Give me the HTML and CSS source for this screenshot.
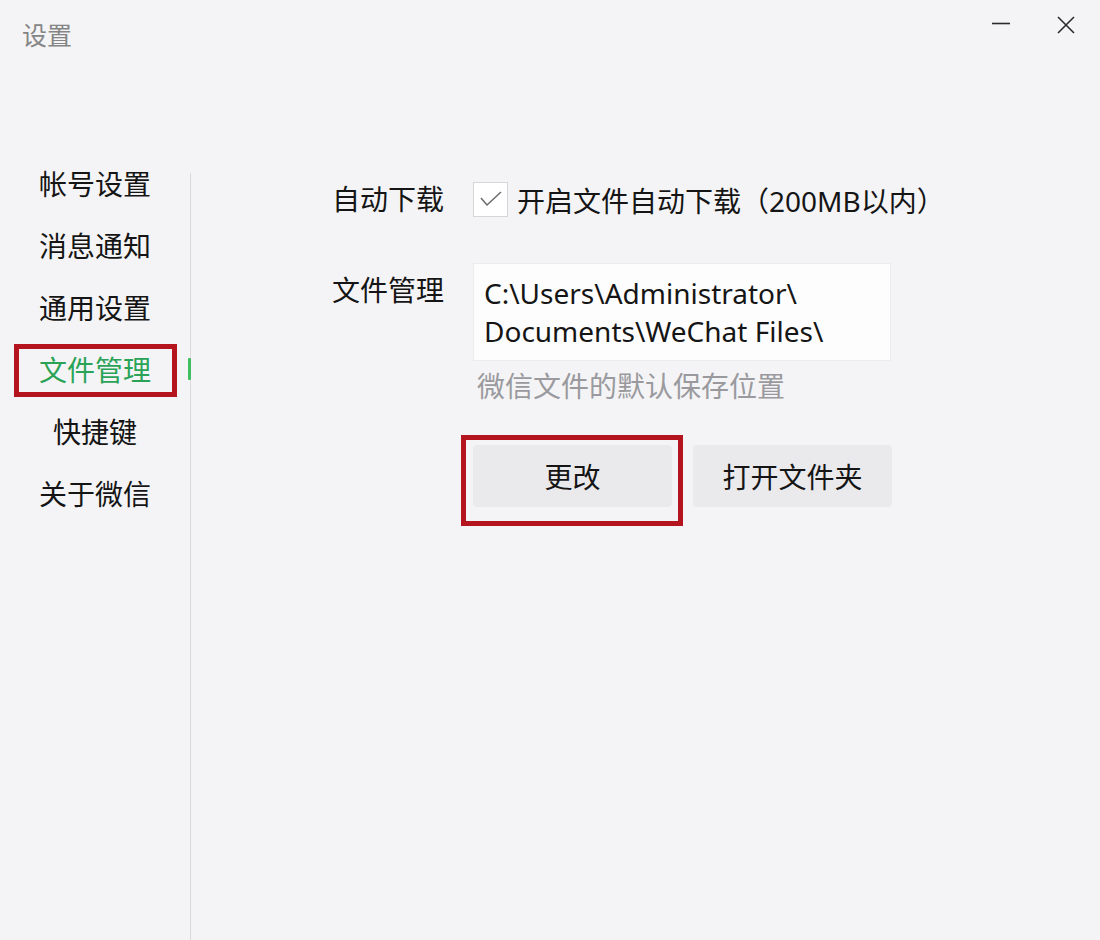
FILE: index.html
```html
<!DOCTYPE html>
<html lang="zh-CN">
<head>
  <meta charset="UTF-8" />
  <title>设置</title>
  <link rel="stylesheet" href="styles.css">
</head>
<body>
  <div class="window">
    <header class="titlebar">
      <span class="title">设置</span>
      <div class="controls">
        <svg class="ctl-min" width="20" height="20" viewBox="0 0 20 20"><path d="M1 9.5h18" stroke="#2b2b2b" stroke-width="1.6"/></svg>
        <svg class="ctl-close" width="20" height="20" viewBox="0 0 20 20"><path d="M2 2l16 16M18 2L2 18" stroke="#2b2b2b" stroke-width="1.6"/></svg>
      </div>
    </header>

    <div class="main">
      <nav class="sidebar">
        <div class="nav-item">帐号设置</div>
        <div class="nav-item">消息通知</div>
        <div class="nav-item">通用设置</div>
        <div class="nav-item active">文件管理</div>
        <div class="nav-item">快捷键</div>
        <div class="nav-item">关于微信</div>
      </nav>
      <div class="divider"></div>

      <section class="content">
        <div class="label label-auto">自动下载</div>
        <label class="check-row">
          <span class="checkbox">
            <svg width="24" height="18" viewBox="0 0 24 18"><path d="M2 8l6 7L22 2" fill="none" stroke="#6a6a6a" stroke-width="1.5"/></svg>
          </span>
          <span class="check-text">开启文件自动下载（200MB以内）</span>
        </label>

        <div class="label label-path">文件管理</div>
        <div class="field">
          <div class="path-box">C:\Users\Administrator\<br>Documents\WeChat Files\</div>
          <div class="hint">微信文件的默认保存位置</div>
        </div>

        <div class="actions">
          <button class="btn btn-change">更改</button>
          <button class="btn">打开文件夹</button>
        </div>
      </section>
    </div>
  </div>
</body>
</html>
```

FILE: styles.css
```css
body {
  margin: 0;
  background: #f4f4f6;
  font-family: "Noto Sans", "Noto Sans CJK SC", sans-serif;
  color: #151515;
}

.window {
  height: 940px;
  display: flex;
  flex-direction: column;
  overflow: hidden;
}

.titlebar {
  height: 153px;
  display: flex;
  justify-content: space-between;
  align-items: flex-start;
  flex-shrink: 0;
}

.title {
  margin: 21px 0 0 22px;
  font-size: 25px;
  line-height: 28px;
  color: #858585;
}

.controls {
  display: flex;
  gap: 45px;
  margin: 15px 24px 0 0;
}

.ctl-min {
  margin-top: -1px;
}

.main {
  flex: 1;
  display: flex;
}

.sidebar {
  width: 190px;
  flex-shrink: 0;
}

.nav-item {
  position: relative;
  height: 62px;
  line-height: 62px;
  text-align: center;
  font-size: 28px;
  color: #151515;
}

.nav-item.active {
  color: #2aa356;
}

/* green marker on the divider */
.nav-item.active::before {
  content: "";
  position: absolute;
  right: -1px;
  top: 19px;
  width: 3px;
  height: 22px;
  background: #3fbf62;
  border-radius: 1px;
}

/* red annotation frame */
.nav-item.active::after {
  content: "";
  position: absolute;
  top: 5px;
  left: 14px;
  right: 13px;
  bottom: 4px;
  border: 5px solid #b3141d;
}

.divider {
  width: 1px;
  margin-top: 20px;
  background: #dadada;
  flex-shrink: 0;
}

.content {
  display: grid;
  grid-template-columns: 111px auto;
  column-gap: 30px;
  align-content: start;
  padding: 26px 0 0 141px;
}

.label {
  font-size: 28px;
  white-space: nowrap;
}

.label-auto {
  line-height: 35px;
  padding-top: 3px;
}

.label-path {
  margin-top: 52px;
  line-height: 38px;
}

.check-row {
  display: flex;
  align-items: center;
  gap: 9px;
  font-size: 28px;
  line-height: 35px;
  white-space: nowrap;
}

.check-text {
  padding-top: 5px;
}

.checkbox {
  width: 33px;
  height: 33px;
  border: 1px solid #d6d6d8;
  background: #fff;
  display: flex;
  align-items: center;
  justify-content: center;
}

.field {
  margin-top: 44px;
}

.path-box {
  width: 396px;
  padding: 10px 10px;
  background: #fdfdfd;
  border: 1px solid #ececee;
  font-size: 28px;
  line-height: 38px;
}

.hint {
  margin-top: 8px;
  padding-left: 4px;
  font-size: 28px;
  line-height: 34px;
  color: #9a9a9e;
}

.actions {
  grid-column: 2;
  display: flex;
  gap: 21px;
  margin-top: 42px;
}

.btn {
  position: relative;
  width: 199px;
  height: 62px;
  border: none;
  border-radius: 4px;
  background: #eaeaec;
  font-family: inherit;
  font-size: 28px;
  color: #151515;
  padding: 0;
}

.btn-change::after {
  content: "";
  position: absolute;
  top: -10px;
  left: -12px;
  right: -11px;
  bottom: -19px;
  border: 5px solid #b3141d;
}
```
